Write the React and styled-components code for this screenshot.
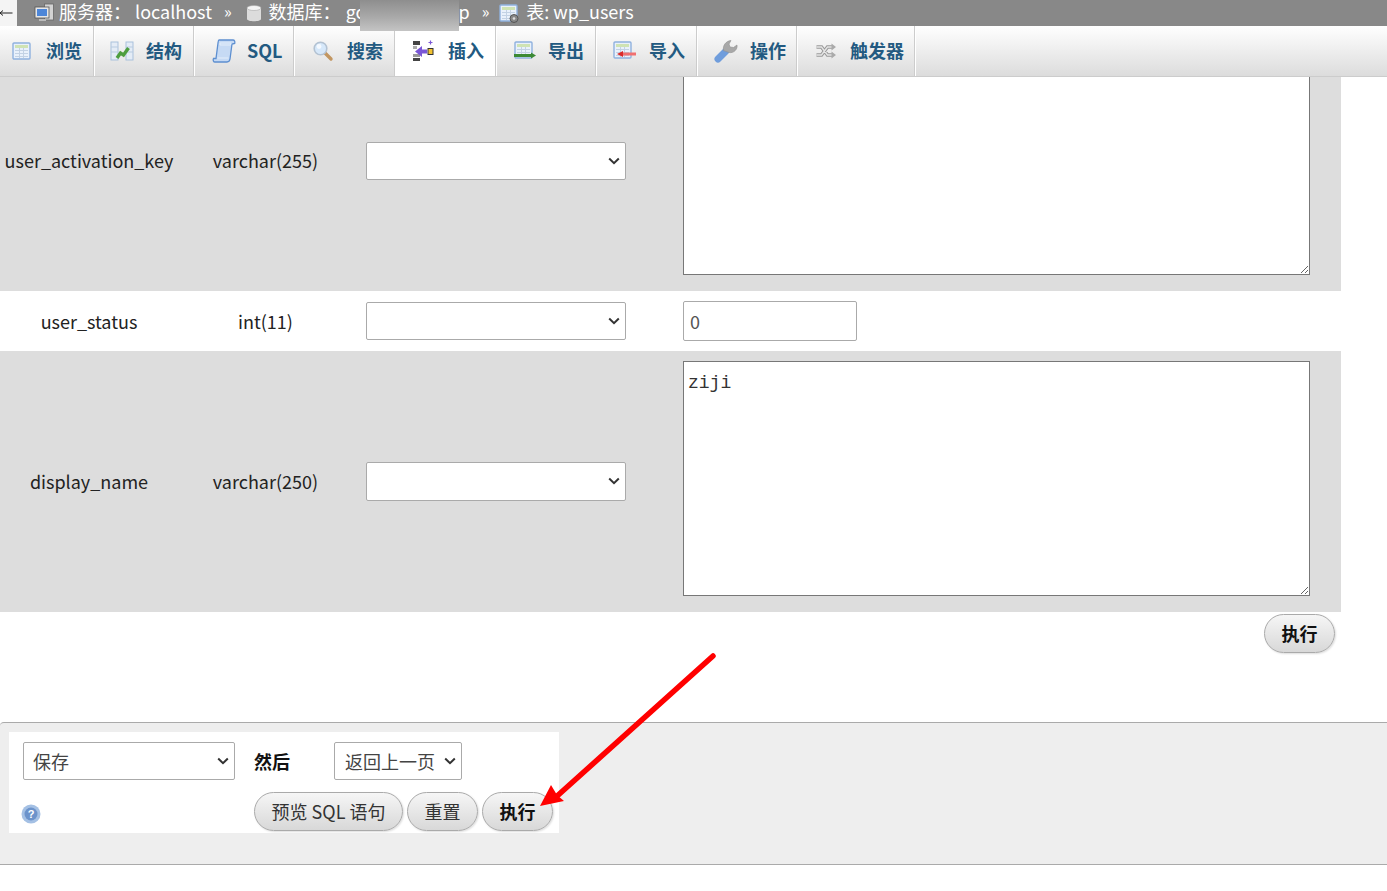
import React from "react";
import styled, { createGlobalStyle } from "styled-components";

const Global = createGlobalStyle`
  html, body { margin: 0; padding: 0; background: #fff; }
  body { font-family: "Noto Sans CJK SC", "Noto Sans", sans-serif; color: #222; font-size: 18px; overflow: hidden; }
  * { box-sizing: border-box; }
`;

const Page = styled.div`
  position: relative;
  width: 1387px;
  height: 891px;
  overflow: hidden;
`;
const TopBars = styled.div`
  position: relative;
  z-index: 2;
`;

const Crumbs = styled.div`
  height: 26px;
  background: #888;
  display: flex;
  align-items: center;
  color: #fff;
  font-size: 18px;
  line-height: 20px;
  white-space: nowrap;
`;
const BackBox = styled.div`
  width: 17px;
  height: 26px;
  background: #f4f4f4;
  display: flex;
  align-items: center;
  margin-right: 17px;
`;
const Crumb = styled.span`
  display: inline-flex;
  align-items: center;
  gap: ${p => p.$gap || 5}px;
`;
const CrumbText = styled.span`
  margin-bottom: 4px;
`;
const DbName = styled.span`
  display: inline-flex;
  justify-content: space-between;
  width: 124px;
  margin-left: 1px;
`;
const Sep = styled.span`
  margin: 0 ${p => p.$r || 14}px 4px 12px;
  font-size: 16px;
`;
const Blur = styled.div`
  position: absolute;
  left: 360px;
  top: 0;
  width: 99px;
  height: 31px;
  background: linear-gradient(180deg, #8e8e8e 0%, #a9a9a9 55%, #c4c4c4 100%);
`;

const Tabs = styled.div`
  height: 51px;
  display: flex;
  background: linear-gradient(180deg, #fff 0%, #dcdcdc 100%);
  border-bottom: 1px solid #ccc;
`;
const Tab = styled.div`
  width: ${p => p.$w}px;
  display: flex;
  align-items: center;
  gap: ${p => p.$gap || 14}px;
  padding-left: ${p => p.$pl || 12}px;
  border-right: 1px solid #fff;
  box-shadow: inset -1px 0 0 #ccc;
  background: ${p => (p.$active ? "#fff" : "transparent")};
  color: #235a81;
  font-weight: 700;
  font-size: 18px;
  white-space: nowrap;
`;
const TabLabel = styled.span`
  margin-top: -2px;
`;

const Rows = styled.div`
  margin-top: -46px;
`;
const Row = styled.div`
  width: 1341px;
  height: ${p => p.$h}px;
  background: ${p => (p.$alt ? "#ddd" : "#fff")};
  display: grid;
  grid-template-columns: 178px 175px 330px 658px;
  align-items: ${p => (p.$top ? "start" : "center")};
`;
const NameCell = styled.div`
  text-align: center;
  align-self: center;
  font-size: 18px;
  line-height: 24px;
  color: #222;
  white-space: nowrap;
  margin-top: ${p => p.$mt || 0}px;
`;
const SelectCell = styled.div`
  padding-left: 13px;
  align-self: center;
  margin-top: ${p => p.$mt || 0}px;
`;
const ValueCell = styled.div`
  display: flex;
  align-items: flex-start;
`;

const chevron = encodeURIComponent(
  '<svg xmlns="http://www.w3.org/2000/svg" width="12" height="8" viewBox="0 0 12 8"><path d="M1.200 1.500L6 6.200l4.800-4.700" fill="none" stroke="#333" stroke-width="2"/></svg>'
);
const Select = styled.select`
  display: block;
  appearance: none;
  width: ${p => p.$w}px;
  height: ${p => p.$h || 38}px;
  border: 1px solid #aaa;
  border-radius: 2px;
  background: #fff url("data:image/svg+xml,${chevron}") no-repeat right 5px center;
  padding: 0 20px 0 ${p => p.$pl || 9}px;
  font-family: inherit;
  font-size: 18px;
  color: #444;
`;
const Area = styled.textarea`
  display: block;
  width: 627px;
  height: ${p => p.$h}px;
  margin-top: ${p => p.$mt || 0}px;
  border: 1px solid #777;
  border-radius: 0;
  padding: 6px 4px;
  background: #fff;
  font-family: "Liberation Mono", monospace;
  font-size: 18px;
  line-height: 30px;
  color: #333;
  outline: none;
`;
const Input = styled.input`
  width: 174px;
  height: 40px;
  border: 1px solid #aaa;
  border-radius: 2px;
  padding: 0 6px;
  background: #fff;
  font-family: inherit;
  font-size: 18px;
  color: #555;
`;

const SubmitRow = styled.div`
  width: 1341px;
  height: 110px;
  padding: 2px 6px 0 0;
  display: flex;
  justify-content: flex-end;
  align-items: flex-start;
`;
const Button = styled.button`
  height: 39px;
  width: ${p => p.$w || 71}px;
  padding: 0 0 2px;
  border: 1px solid #aaa;
  border-radius: 20px;
  background: linear-gradient(180deg, #f6f6f6 0%, #d8d8d8 100%);
  box-shadow: 1px 1px 2px #ddd;
  font-family: inherit;
  font-size: 18px;
  color: ${p => (p.$bold ? "#111" : "#333")};
  font-weight: ${p => (p.$bold ? 700 : 400)};
  white-space: nowrap;
`;

const Footer = styled.div`
  height: 143px;
  background: #eee;
  border-top: 1px solid #aaa;
  border-bottom: 1px solid #aaa;
  border-top-left-radius: 4px;
  padding: 9px 0 0 9px;
`;
const FooterBox = styled.div`
  width: 550px;
  height: 101px;
  background: #fff;
  padding: 10px 0 0 14px;
  display: flex;
  flex-direction: column;
  gap: 12px;
`;
const FooterLine = styled.div`
  display: flex;
  align-items: ${p => p.$align || "center"};
`;
const Then = styled.span`
  font-weight: 700;
  color: #111;
  width: 80px;
  margin-left: 19px;
`;
const HelpSlot = styled.div`
  width: 233px;
  margin-left: -2px;
  padding-top: 12px;
`;
const Buttons = styled.div`
  display: flex;
  gap: 4px;
`;
const ArrowOverlay = styled.svg`
  position: absolute;
  left: 530px;
  top: 645px;
  pointer-events: none;
  z-index: 3;
`;

/* ---------- icons ---------- */
const Ico = styled.svg`
  flex: none;
  display: block;
`;
const BackIcon = () => (
  <Ico width="13" height="10" viewBox="0 0 13 10">
    <path d="M0 5h12.500" stroke="#222" strokeWidth="1" fill="none" />
    <path d="M3 2.500L0 5l3 2.500" stroke="#222" strokeWidth="1" fill="none" />
  </Ico>
);
const TableGrid = ({ x = 1, y = 3 }) => (
  <g>
    <rect x={x} y={y} width="17" height="16" rx="1" fill="#e9f1fb" stroke="#8fb1de" strokeWidth="1.4" />
    <rect x={x + 2} y={y + 2} width="13" height="3" fill="#cfe3b4" />
    <path d={`M${x + 2} ${y + 7.5}h13M${x + 2} ${y + 10.5}h13M${x + 2} ${y + 13.5}h13M${x + 6.5} ${y + 5}v10M${x + 10.5} ${y + 5}v10`} stroke="#c3d2e4" strokeWidth="1" fill="none" />
  </g>
);
const Browse = () => <Ico width="22" height="22" viewBox="0 0 22 22"><TableGrid x={2} y={3} /></Ico>;
const Structure = () => (
  <Ico width="24" height="22" viewBox="0 0 24 22">
    <rect x="1" y="2" width="7" height="18" fill="#e4ecf6" stroke="#aac1dc" />
    <rect x="16" y="2" width="7" height="18" fill="#e4ecf6" stroke="#aac1dc" />
    <path d="M1 7h7M1 12h7M16 7h7M16 12h7" stroke="#b8cbe0" />
    <path d="M7 18l3.500-5 3 2 5-7" stroke="#4d9e3f" strokeWidth="3.400" fill="none" />
  </Ico>
);
const Scroll = () => (
  <Ico width="24" height="26" viewBox="0 0 24 26">
    <path d="M7 2h14c1.500 0 2.200 1.500 1.700 3.500L20 6 18 21c-.3 2-1.500 3-3 3H3c-1.500 0-2.300-1.800-1.500-3.500H4L6 5c.2-1.500.3-3 1-3z" fill="#c6daf4" stroke="#5d8fd0" strokeWidth="1.300" />
    <path d="M8 5h11l-.5 2H8zM5.500 20h11" stroke="#e4eefa" strokeWidth="1" fill="none" />
  </Ico>
);
const Search = () => (
  <Ico width="22" height="22" viewBox="0 0 22 22">
    <path d="M13 13l6 6" stroke="#c29661" strokeWidth="3.400" strokeLinecap="round" />
    <circle cx="8.500" cy="8.500" r="6.300" fill="#d6e8fa" stroke="#b3c2d2" strokeWidth="1.600" />
    <circle cx="7" cy="6.500" r="2.400" fill="#f4f9ff" />
  </Ico>
);
const Insert = () => (
  <Ico width="22" height="24" viewBox="0 0 22 24">
    <rect x="1" y="2" width="7" height="4" fill="#444" />
    <rect x="1" y="7" width="4" height="3" fill="#aaa" />
    <rect x="1" y="15" width="7" height="3" fill="#999" />
    <rect x="1" y="19" width="7" height="3" fill="#444" />
    <path d="M3 12.500l7-5.500v3.500h5v4h-5V18z" fill="#7a57d6" />
    <rect x="16" y="9.500" width="5" height="6" fill="#f2c230" stroke="#333" strokeWidth="1" />
    <path d="M18.500 1.500v4M16.500 3.500h4" stroke="#7a57d6" strokeWidth="1.200" />
  </Ico>
);
const Export = () => (
  <Ico width="24" height="22" viewBox="0 0 24 22">
    <TableGrid x={2} y={2} />
    <path d="M1 15.500h18" stroke="#3c8a35" strokeWidth="3" />
    <path d="M18 12.500l5 3-5 3z" fill="#3c8a35" />
  </Ico>
);
const Import = () => (
  <Ico width="24" height="22" viewBox="0 0 24 22">
    <TableGrid x={1} y={2} />
    <path d="M8 14h15" stroke="#f17070" strokeWidth="3" />
    <path d="M10 11l-6 3 6 3z" fill="#d92a2a" />
  </Ico>
);
const Wrench = () => (
  <Ico width="24" height="24" viewBox="0 0 24 24">
    <path d="M4 20l8-8" stroke="#6f9ddc" strokeWidth="7" strokeLinecap="round" />
    <path d="M9.500 11.500C8.500 6.500 12 2 17 1.500l-2 3.500 1 3 3.500.5 3.500-2.500c.8 4.500-3.500 8.500-8 7.500z" fill="#a8a8a8" stroke="#909090" strokeWidth=".6" />
  </Ico>
);
const TriggerLines = ({ color, w }) => (
  <path d="M1.500 4h5l6 8h5M1.500 12h5l6-8h5" stroke={color} strokeWidth={w} fill="none" />
);
const Trigger = () => (
  <Ico width="22" height="16" viewBox="0 0 22 16">
    <TriggerLines color="#999" w="3.600" />
    <TriggerLines color="#e6e6e6" w="1.400" />
    <path d="M16.500 .5l4.500 3.500-4.500 3.500zM16.500 8.500l4.500 3.500-4.500 3.500z" fill="#aaa" />
  </Ico>
);
const Server = () => (
  <Ico width="20" height="20" viewBox="0 0 20 20">
    <rect x="10.500" y="1" width="9" height="16" fill="#d3d3d3" stroke="#666" strokeWidth=".8" />
    <rect x="1" y="4" width="14" height="11" fill="#e6e6e6" stroke="#555" strokeWidth=".8" />
    <rect x="3" y="6" width="10" height="7" fill="#4d86d8" />
    <rect x="5" y="16" width="7" height="2" fill="#bbb" />
  </Ico>
);
const Db = () => (
  <Ico width="16" height="19" viewBox="0 0 16 19">
    <path d="M1 4v11c0 3 14 3 14 0V4z" fill="#dcdcdc" />
    <ellipse cx="8" cy="4" rx="7" ry="2.500" fill="#f4f4f4" stroke="#aaa" strokeWidth=".6" />
  </Ico>
);
const TableCog = () => (
  <Ico width="21" height="21" viewBox="0 0 21 21">
    <TableGrid x={1} y={2} />
    <circle cx="15" cy="15.500" r="4" fill="#888" stroke="#555" strokeWidth="1" />
    <circle cx="15" cy="15.500" r="1.300" fill="#ddd" />
  </Ico>
);
const Help = () => (
  <Ico width="20" height="20" viewBox="0 0 20 20">
    <circle cx="10" cy="10" r="9.500" fill="#a4c0e4" />
    <circle cx="10" cy="10" r="6.500" fill="#6c93cb" />
    <text x="10" y="14" textAnchor="middle" fontSize="11" fontWeight="700" fill="#fff" fontFamily="Liberation Sans">?</text>
  </Ico>
);

const tabs = [
  { label: "浏览", w: 95, icon: <Browse />, pl: 11, gap: 13 },
  { label: "结构", w: 100, icon: <Structure />, pl: 15, gap: 12 },
  { label: "SQL", w: 100, icon: <Scroll />, pl: 17, gap: 11 },
  { label: "搜索", w: 101, icon: <Search />, pl: 17, gap: 13 },
  { label: "插入", w: 101, icon: <Insert />, active: true, pl: 16, gap: 14 },
  { label: "导出", w: 100, icon: <Export />, pl: 16, gap: 11 },
  { label: "导入", w: 101, icon: <Import />, pl: 16, gap: 12 },
  { label: "操作", w: 100, icon: <Wrench />, pl: 16, gap: 12 },
  { label: "触发器", w: 118, icon: <Trigger />, pl: 17, gap: 13 },
];

export default function App() {
  return (
    <Page>
      <Global />
      <TopBars>
        <Crumbs>
          <BackBox><BackIcon /></BackBox>
          <Crumb><Server /><CrumbText>{"服务器\uFF1A localhost"}</CrumbText></Crumb>
          <Sep>»</Sep>
          <Crumb $gap={7}><Db /><CrumbText>{"数据库\uFF1A "}<DbName><span>go</span><span>p</span></DbName></CrumbText></Crumb>
          <Sep $r={10}>»</Sep>
          <Crumb $gap={6}><TableCog /><CrumbText>表: wp_users</CrumbText></Crumb>
        </Crumbs>
        <Tabs>
          {tabs.map(t => (
            <Tab key={t.label} $w={t.w} $active={t.active} $pl={t.pl} $gap={t.gap}>
              {t.icon}
              <TabLabel>{t.label}</TabLabel>
            </Tab>
          ))}
        </Tabs>
        <Blur />
      </TopBars>
      <Rows>
        <Row $alt $h={260} $top>
          <NameCell $mt={-2}>user_activation_key</NameCell>
          <NameCell $mt={-2}>varchar(255)</NameCell>
          <SelectCell><Select $w={260} /></SelectCell>
          <ValueCell><Area $h={234} $mt={10} readOnly defaultValue="" /></ValueCell>
        </Row>
        <Row $h={60}>
          <NameCell>user_status</NameCell>
          <NameCell>int(11)</NameCell>
          <SelectCell $mt={-1}><Select $w={260} /></SelectCell>
          <ValueCell><Input readOnly defaultValue="0" /></ValueCell>
        </Row>
        <Row $alt $h={261} $top>
          <NameCell $mt={-2}>display_name</NameCell>
          <NameCell $mt={-2}>varchar(250)</NameCell>
          <SelectCell $mt={-1}><Select $w={260} $h={39} /></SelectCell>
          <ValueCell><Area $h={235} $mt={10} readOnly defaultValue="ziji" /></ValueCell>
        </Row>
      </Rows>
      <SubmitRow><Button $bold>执行</Button></SubmitRow>
      <Footer>
        <FooterBox>
          <FooterLine>
            <Select $w={212}><option>保存</option></Select>
            <Then>然后</Then>
            <Select $w={128} $pl={10}><option>返回上一页</option></Select>
          </FooterLine>
          <FooterLine $align="flex-start">
            <HelpSlot><Help /></HelpSlot>
            <Buttons>
              <Button $w={149}>预览 SQL 语句</Button>
              <Button>重置</Button>
              <Button $bold>执行</Button>
            </Buttons>
          </FooterLine>
        </FooterBox>
      </Footer>
      <ArrowOverlay width="200" height="175" viewBox="0 0 200 175">
        <path d="M183 11L26 152" stroke="#f00" strokeWidth="5.500" strokeLinecap="round" />
        <path d="M10 161L21 140L27 150L34 156z" fill="#f00" />
      </ArrowOverlay>
    </Page>
  );
}
